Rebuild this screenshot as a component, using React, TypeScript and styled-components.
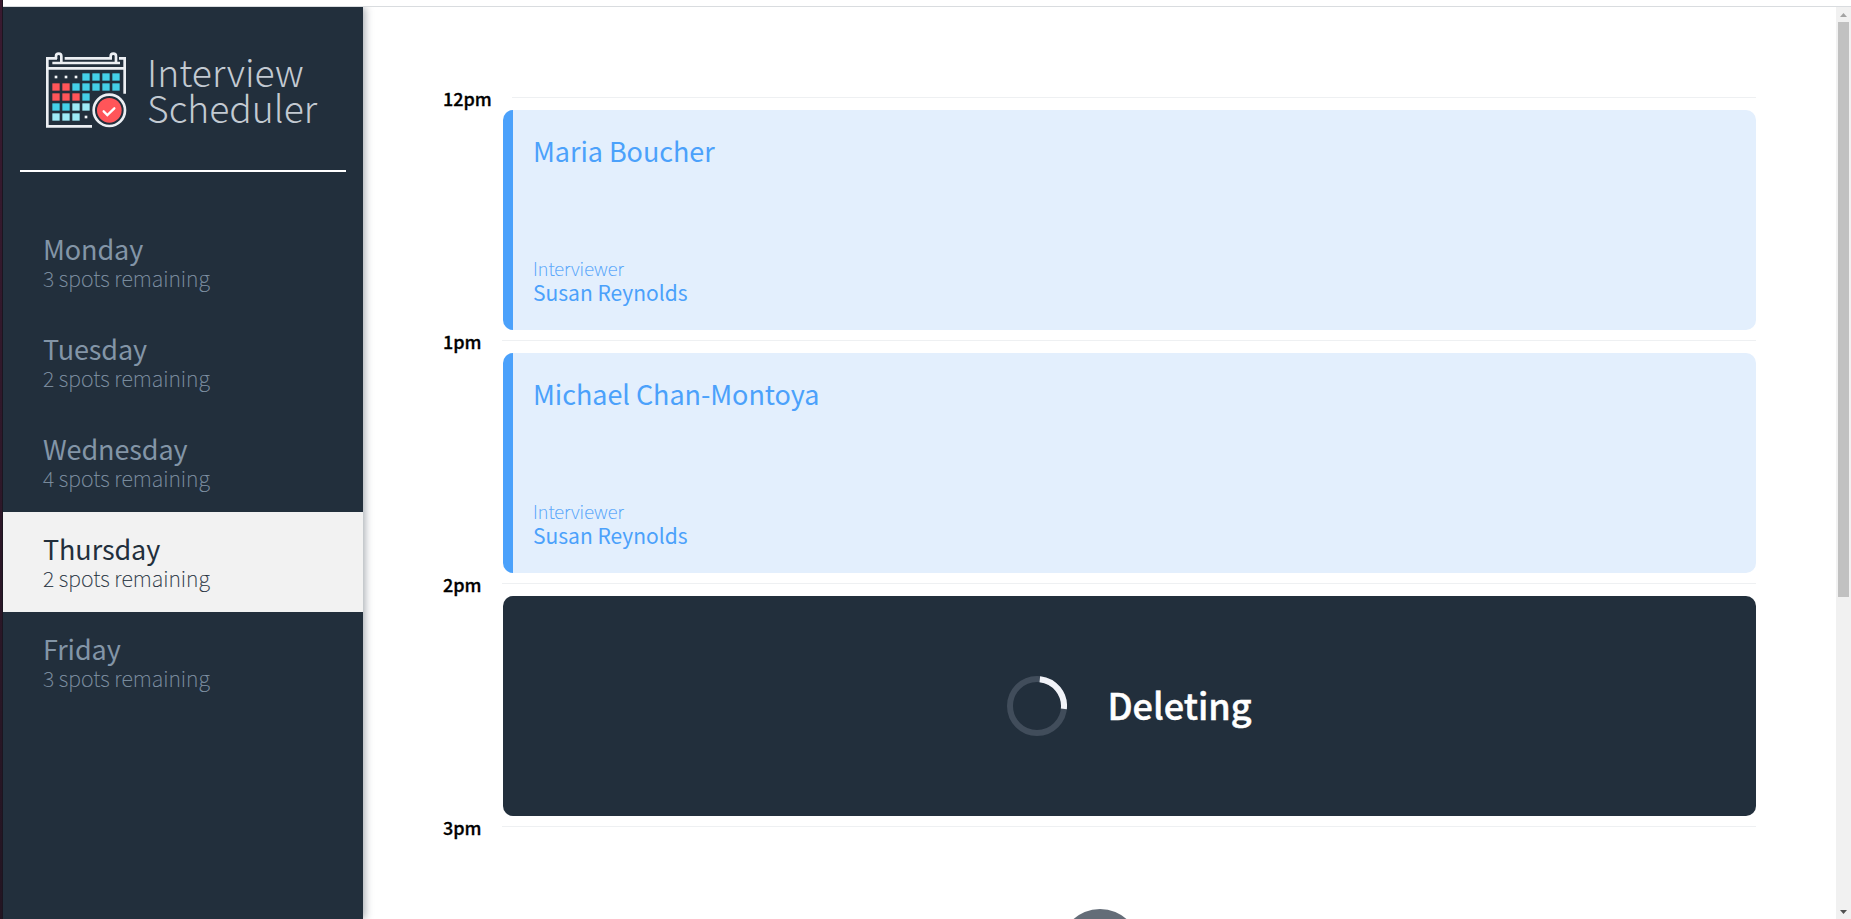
import React from 'react';
import styled, { createGlobalStyle } from 'styled-components';

const NAVY = '#222f3c';
const BLUE = '#4ba1fb';

const GlobalStyle = createGlobalStyle`
  * { box-sizing: border-box; }
  body {
    margin: 0;
    background: #fff;
    font-family: "Noto Sans CJK SC", "Noto Sans", sans-serif;
  }
`;

const Window = styled.div`
  display: flex;
  height: 919px;
  overflow: hidden;
`;

const WindowEdge = styled.div`
  width: 3px;
  flex: none;
  background: linear-gradient(#3a1a30, #231522);
  border-right: 1px solid #1b1520;
`;

const Page = styled.div`
  flex: 1;
  min-width: 0;
  display: flex;
  flex-direction: column;
`;

const ToolbarEdge = styled.div`
  height: 7px;
  flex: none;
  border-bottom: 1px solid #d9dcdf;
`;

const Layout = styled.main`
  flex: 1;
  min-height: 0;
  display: flex;
  overflow: hidden;
`;

const Sidebar = styled.aside`
  width: 360px;
  flex: none;
  background: ${NAVY};
  box-shadow: 2px 0 8px rgba(34, 47, 62, 0.4);
`;

const Brand = styled.header`
  display: flex;
  height: 163px;
  padding: 43px 0 0 41px;
`;

const BrandName = styled.div`
  margin: 3px 0 0 19px;
  font-size: 37.3px;
  font-weight: 300;
  line-height: 36.3px;
  color: #c3cad2;
`;

const Separator = styled.hr`
  width: 326px;
  height: 2px;
  margin: 0 17px 40px;
  border: 0;
  background: #fff;
`;

const DayList = styled.ul`
  margin: 0;
  padding: 0;
  list-style: none;
`;

const DayItem = styled.li<{ $selected?: boolean }>`
  height: 100px;
  padding: 22px 0 0 40px;
  color: ${(p) => (p.$selected ? NAVY : '#8395a7')};
  background: ${(p) => (p.$selected ? '#f2f2f2' : 'transparent')};
`;

const DayName = styled.h2`
  margin: 0;
  font-size: 27px;
  font-weight: 400;
  line-height: 30px;
  letter-spacing: -0.1px;
`;

const Spots = styled.p`
  margin: 0;
  font-size: 21.4px;
  font-weight: 100;
  line-height: 27px;
  -webkit-text-stroke: 0.2px currentColor;
`;

const Schedule = styled.section`
  flex: 1;
  min-width: 0;
  padding: 80px 80px 0;
`;

const Slot = styled.article`
  height: 243px;
`;

const SlotHeader = styled.header`
  display: flex;
  gap: 20px;
  height: 23px;
`;

const Time = styled.h4`
  margin: 0;
  font-size: 18px;
  font-weight: 500;
  line-height: 23px;
  -webkit-text-stroke: 0.3px currentColor;
`;

const Rule = styled.hr`
  flex: 1;
  height: 1px;
  margin: 10px 0 0;
  border: 0;
  background: #eef0f2;
`;

const Card = styled.div`
  display: flex;
  flex-direction: column;
  justify-content: space-between;
  height: 220px;
  margin-left: 60px;
  padding: 25px 20px 26px;
  border-left: 10px solid ${BLUE};
  border-radius: 10px;
  background: #e3effd;
  color: ${BLUE};
`;

const Student = styled.h2`
  margin: 0;
  font-size: 27px;
  font-weight: 400;
  line-height: 32px;
  letter-spacing: -0.06px;
`;

const InterviewerLabel = styled.h4`
  margin: 0;
  font-size: 18.4px;
  font-weight: 100;
  line-height: 24px;
  -webkit-text-stroke: 0.2px currentColor;
`;

const InterviewerName = styled.h3`
  margin: 0;
  font-size: 21px;
  font-weight: 400;
  line-height: 24px;
`;

const StatusCard = styled.div`
  display: flex;
  align-items: center;
  justify-content: center;
  gap: 40px;
  height: 220px;
  margin-left: 60px;
  border-radius: 10px;
  background: ${NAVY};
`;

const StatusText = styled.h1`
  margin: 0;
  padding-bottom: 5px;
  font-size: 36px;
  font-weight: 500;
  line-height: 40px;
  color: #fff;
  -webkit-text-stroke: 0.5px currentColor;
`;

const EmptySlot = styled.div`
  display: flex;
  align-items: center;
  justify-content: center;
  height: 220px;
`;

const AddButton = styled.button`
  width: 80px;
  height: 80px;
  border: 0;
  border-radius: 50%;
  background: #646d78;
`;

const ScrollTrack = styled.div`
  display: flex;
  flex-direction: column;
  align-items: center;
  width: 15px;
  flex: none;
  background: #f1f1f1;
`;

const ScrollThumb = styled.div`
  width: 11px;
  height: 575px;
  margin-bottom: auto;
  background: #c1c1c1;
`;

const ScrollArrow = ({ down }: { down?: boolean }) => (
  <svg width="15" height="15" viewBox="0 0 15 15">
    {down ? <path d="M4 6h7l-3.5 4z" fill="#505050" /> : <path d="M4 10h7L7.5 6z" fill="#a3a3a3" />}
  </svg>
);

const CELL_COLOURS: Record<string, string> = { c: '#44d0e8', r: '#ff5559', l: '#9deaf6' };
const CELL_ROWS = ['...cccc', 'rrccccc', 'rrrc', 'ccll', 'lll.'];

const CalendarLogo = () => (
  <svg width="84" height="80" viewBox="132 150 252 240">
    {CELL_ROWS.flatMap((row, y) =>
      row.split('').map((cell, x) =>
        cell === '.' ? (
          <rect key={`${x}${y}`} x={164 + x * 30} y={227 + y * 30} width="8" height="8" fill="#f4f6f8" />
        ) : (
          <rect key={`${x}${y}`} x={157 + x * 30} y={220 + y * 30} width="22" height="22" fill={CELL_COLOURS[cell]} />
        ),
      ),
    )}
    <g fill="none" stroke="#eceff3" strokeWidth="8">
      <path d="M276 379H142V175h29M194 175h142M357 175h17v106M142 205h232M157 189h203" />
      <path d="M168 177v-8a8 8 0 0 1 16 0v20M332 177v-8a8 8 0 0 1 16 0v20" />
      <circle cx="328" cy="331" r="47" />
    </g>
    <circle cx="328" cy="331" r="37" fill="#ff5559" />
    <path d="M311 334l11 11 21-20" fill="none" stroke="#fff" strokeWidth="7" strokeLinecap="round" />
  </svg>
);

const Spinner = () => (
  <svg width="60" height="60" viewBox="0 0 60 60" fill="none" strokeWidth="6">
    <circle cx="30" cy="30" r="27" stroke="#414d5b" />
    <path d="M30 3A27 27 0 0 1 57 30" stroke="#f1f3f8" transform="rotate(6 30 30)" />
  </svg>
);

const DAYS = [
  { name: 'Monday', spots: 3 },
  { name: 'Tuesday', spots: 2 },
  { name: 'Wednesday', spots: 4 },
  { name: 'Thursday', spots: 2 },
  { name: 'Friday', spots: 3 },
];

const SlotTime = ({ time }: { time: string }) => (
  <SlotHeader>
    <Time>{time}</Time>
    <Rule />
  </SlotHeader>
);

const Booking = ({ time, student, interviewer }: { time: string; student: string; interviewer: string }) => (
  <Slot>
    <SlotTime time={time} />
    <Card>
      <Student>{student}</Student>
      <div>
        <InterviewerLabel>Interviewer</InterviewerLabel>
        <InterviewerName>{interviewer}</InterviewerName>
      </div>
    </Card>
  </Slot>
);

export default function App() {
  return (
    <Window>
      <GlobalStyle />
      <WindowEdge />
      <Page>
        <ToolbarEdge />
        <Layout>
          <Sidebar>
            <Brand>
              <CalendarLogo />
              <BrandName>
                Interview
                <br />
                Scheduler
              </BrandName>
            </Brand>
            <Separator />
            <DayList>
              {DAYS.map((day) => (
                <DayItem key={day.name} $selected={day.name === 'Thursday'}>
                  <DayName>{day.name}</DayName>
                  <Spots>{day.spots} spots remaining</Spots>
                </DayItem>
              ))}
            </DayList>
          </Sidebar>
          <Schedule>
            <Booking time="12pm" student="Maria Boucher" interviewer="Susan Reynolds" />
            <Booking time="1pm" student="Michael Chan-Montoya" interviewer="Susan Reynolds" />
            <Slot>
              <SlotTime time="2pm" />
              <StatusCard>
                <Spinner />
                <StatusText>Deleting</StatusText>
              </StatusCard>
            </Slot>
            <Slot>
              <SlotTime time="3pm" />
              <EmptySlot>
                <AddButton aria-label="Add" />
              </EmptySlot>
            </Slot>
          </Schedule>
          <ScrollTrack>
            <ScrollArrow />
            <ScrollThumb />
            <ScrollArrow down />
          </ScrollTrack>
        </Layout>
      </Page>
    </Window>
  );
}
